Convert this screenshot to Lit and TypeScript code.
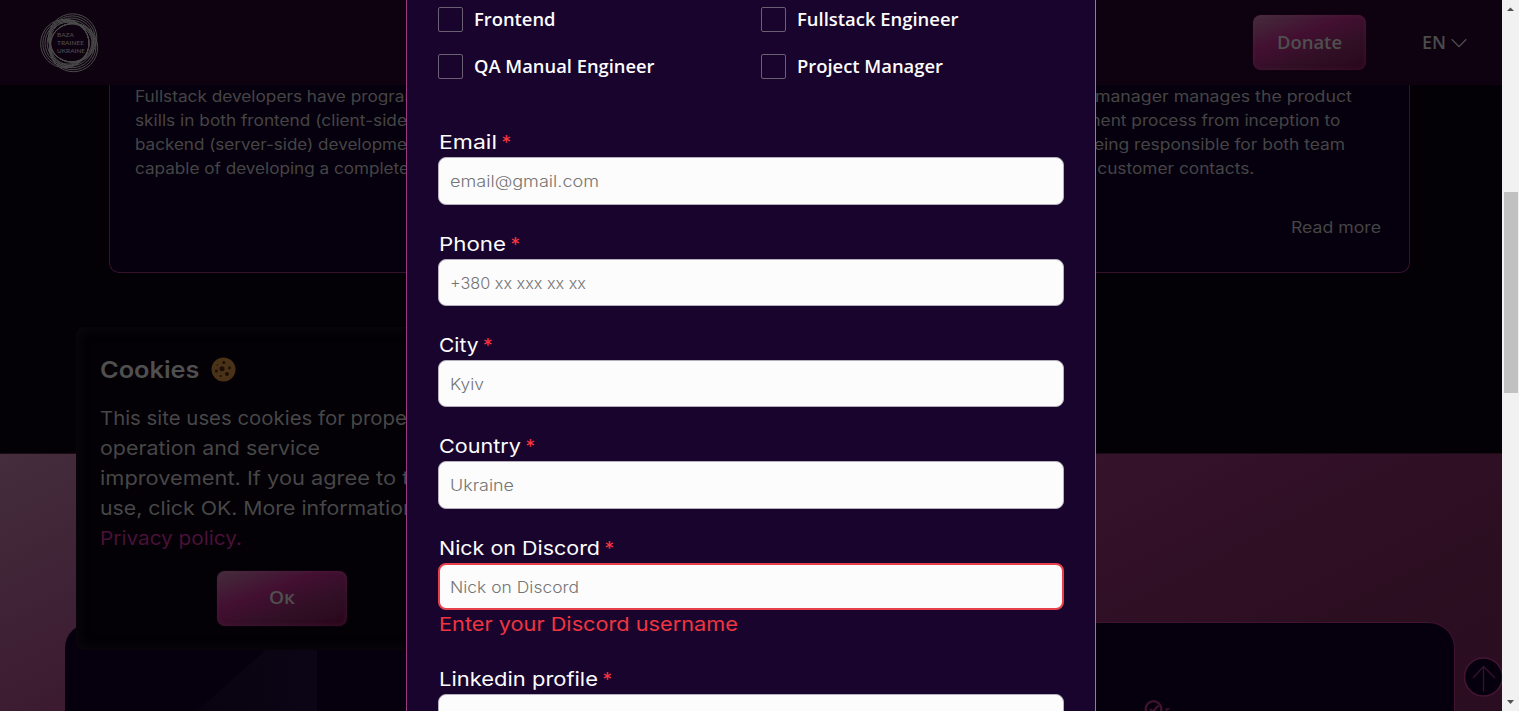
import { LitElement, html, css, svg, nothing } from "lit";
import { customElement, property, query } from "lit/decorators.js";

/** One line of text whose visible run is stretched to a given width. */
@customElement("fit-text")
class FitText extends LitElement {
  @property({ type: Number }) w = 0;
  @property() text = "";
  @property() lead = "";
  @property() tail = "";
  @query(".run") run!: HTMLElement;
  @query(".line") line!: HTMLElement;

  static styles = css`
    :host { display: inline-flex; white-space: pre; vertical-align: top; }
    .line { display: inline-flex; flex: none; transform-origin: 0 50%; }
    .line.end { transform-origin: 100% 50%; }
    :host([flip]) { justify-content: flex-end; }
  `;

  render() {
    return html`<span class="line ${this.lead ? "end" : ""}"
      ><span>${this.lead}</span><span class="run">${this.text}</span><span>${this.tail}</span></span
    >`;
  }

  updated() {
    const natural = this.run.getBoundingClientRect().width;
    if (!natural || !this.w) return;
    this.style.width = `${this.w}px`;
    this.line.style.transform = `scaleX(${this.w / natural})`;
  }
}

@customElement("form-field")
class FormField extends LitElement {
  @property() label = "";
  @property({ type: Number }) lw = 0;
  @property() hint = "";
  @property({ type: Number }) hw = 0;
  @property() error = "";

  static styles = css`
    :host { display: block; font-family: Inter, sans-serif; }
    .label { display: flex; gap: 4.5px; height: 30px; line-height: 31px; font-size: 19.2px; color: #fcfcfc; padding-left: 1px; font-weight: 400; }
    .star { color: #fc3441; }
    .input { box-sizing: border-box; height: 47.3px; border-radius: 8px; background: #fcfcfc; border: 1px solid #b5afbb;
      padding: 0 11px; font-size: 15.2px; line-height: 47px; color: #757575; font-weight: 300; }
    .input.bad { border: 2px solid #e8404b; padding: 0 10px; line-height: 45px; }
    .error { height: 30px; line-height: 29px; font-size: 19.2px; color: #f03541; padding-left: 1px; font-weight: 400; }
  `;

  render() {
    return html`
      <div class="label"><fit-text .w=${this.lw} .text=${this.label}></fit-text><span class="star">*</span></div>
      <div class="input ${this.error ? "bad" : ""}"><fit-text .w=${this.hw} .text=${this.hint}></fit-text></div>
      ${this.error ? html`<div class="error"><fit-text .w=${299} .text=${this.error}></fit-text></div>` : nothing}
    `;
  }
}

const ROLES: [string, number][] = [
  ["Frontend", 81.5],
  ["Fullstack Engineer", 161.5],
  ["QA Manual Engineer", 180.5],
  ["Project Manager", 146],
];

const FIELDS = [
  { label: "Email", lw: 58, hint: "email@gmail.com", hw: 149 },
  { label: "Phone", lw: 67, hint: "+380 xx xxx xx xx", hw: 136 },
  { label: "City", lw: 39.5, hint: "Kyiv", hw: 34 },
  { label: "Country", lw: 82, hint: "Ukraine", hw: 64 },
  { label: "Nick on Discord", lw: 161, hint: "Nick on Discord", hw: 129, error: "Enter your Discord username" },
  { label: "Linkedin profile", lw: 159, hint: "", hw: 0 },
];

const LEFT_LINES: [string, number, string][] = [
  ["Fullstack developers have progra", 269.5, "mming"],
  ["skills in both frontend (client-side", 272, ")"],
  ["backend (server-side) developme", 272, "nt"],
  ["capable of developing a complete", 274, ""],
];
const RIGHT_LINES: [string, number, number, string][] = [
  ["manager manages the product", 257, 0.5, "Project "],
  ["process from inception to", 209, 12.5, "development "],
  ["responsible for both team", 211, 7.5, "being "],
  ["customer contacts.", 157, 98.5, "and "],
];

const COOKIE_LINES: [string, number, string][] = [
  ["This site uses cookies for prop", 295, "er"],
  ["operation and service", 220, ""],
  ["improvement. If you agree to", 296, " their"],
  ["use, click OK. More informatio", 303, "n"],
];

/** Three fans of circles, each touching the hollow centre on one side. */
const rings = [-65, 55, 175].flatMap((deg) => {
  const a = (deg * Math.PI) / 180;
  return [0, 1, 2, 3].map((i) => {
    const off = 2.2 + 1.1 * i;
    return { x: 30.3 + off * Math.cos(a), y: 30 + off * Math.sin(a), r: 20.9 + 1.1 * i };
  });
});

@customElement("app-root")
class AppRoot extends LitElement {
  static styles = css`
    :host { display: block; position: relative; width: 1519px; height: 711px; overflow: hidden; background: #030006;
      font-family: Inter, sans-serif; color: #4b4b4b; }
    .shell { display: flex; height: 711px; }
    .page { width: 1502px; height: 711px; overflow: hidden; display: flex; flex-direction: column; }
    .header { box-sizing: border-box; height: 85px; flex: none; background: #0e0110; display: flex; align-items: center;
      padding: 0 35.5px 0 40px; font-family: "Open Sans", sans-serif; font-weight: 600; font-size: 18px; }
    .logo { width: 60px; height: 60px; display: block; margin-right: auto; }
    .btn { box-sizing: border-box; display: flex; align-items: center; justify-content: center; border-radius: 8px; color: #4f4f4f;
      padding-bottom: 2px;
      background: linear-gradient(160deg, #442d3c 0%, #430f31 38%, #300f25 68%, #290619 100%);
      box-shadow: inset 0 0 5px rgba(90, 35, 70, .45), 0 0 3px #1a0716; }
    .donate { width: 113px; height: 55px; margin-right: 56px; }
    .lang { display: flex; align-items: center; gap: 4.5px; }
    .lang fit-text { padding-bottom: 2px; }
    .cards { flex: none; box-sizing: border-box; height: 188.4px; margin: 0 92.5px 0 109px; border: 1px solid #38112f; border-top: 0;
      border-radius: 0 0 10px 10px; background: #06000e; display: flex; justify-content: space-between;
      padding: 0 28px 0 24.500px; font-size: 15.3px; line-height: 24px; color: #454545; }
    .col { display: flex; flex-direction: column; align-items: flex-start; }
    .col.right { align-items: flex-end; width: 330px; }
    .line { display: flex; height: 24px; }
    .more { margin-top: 35px; }
    .band { flex: 1; margin-top: 179.6px; border-top: 1px solid #1c0a16; display: flex; padding: 168px 47px 0 65px;
      background: linear-gradient(153deg, #442d3c 0%, #3c1b31 27%, #43102f 37%, #35142b 53%, #331129 62%, #2c0e21 82%, #2a0d20 100%); }
    .panel { flex: 1; height: 90px; border-radius: 26px 26px 0 0; background: #06000e; border-top: 1px solid #401331;
      border-right: 1px solid #401331; overflow: hidden; display: flex; justify-content: space-between; }
    .bar { box-sizing: border-box; width: 17px; background: #f1f1f1; display: flex; flex-direction: column; align-items: center; }
    .bar svg { display: block; flex: none; }
    .thumb { width: 14px; height: 201px; margin: 175px 0 auto 1px; background: #c1c1c1; }
    .cookie { position: absolute; left: 76px; top: 327px; box-sizing: border-box; width: 412px; height: 323px; border-radius: 8px;
      background: #030006; box-shadow: inset 0 0 14px #0d0a10; padding: 24px; color: #474747; }
    .ctitle { display: flex; align-items: center; gap: 11px; height: 37px; font-weight: 600; font-size: 23.3px; color: #4f4f4f; }
    .ctext { margin-top: 15px; font-size: 19.2px; line-height: 30px; }
    .policy { color: #4a1139; }
    .ok { width: 130px; height: 55px; margin: 17.5px auto 0; font: 600 18px "Open Sans", sans-serif; }
    .top { position: absolute; left: 1463px; top: 656px; width: 39px; height: 42px; overflow: hidden; }
    .modal { position: absolute; left: 406px; top: 0; box-sizing: border-box; width: 690px; height: 711px; overflow: hidden;
      background: #19042e; border-left: 1px solid #9c3983; border-right: 1px solid #cc5aac; padding: 7px 31px 0; }
    .roles { display: grid; grid-template-columns: 323px 1fr; row-gap: 22.5px; font: 600 18px "Open Sans", sans-serif; color: #fcfcfc; }
    .role { display: flex; align-items: center; height: 24.5px; gap: 11px; }
    .box { box-sizing: border-box; width: 25px; height: 24.5px; border: 1px solid #6a5f73; border-radius: 2px; }
    .fields { display: flex; flex-direction: column; gap: 24px; margin-top: 48.9px; }
  `;

  render() {
    return html`
      <div class="shell">
        <div class="page">
          <div class="header">
            <svg class="logo" viewBox="0 0 60 60" fill="none" stroke="#4b4b4b" stroke-width="1">
              ${rings.map((c) => svg`<circle cx=${c.x} cy=${c.y} r=${c.r}></circle>`)}
              <g fill="#4b4b4b" stroke="none" font-family="Lato, sans-serif" font-size="6.400">
                <text x="17" y="24" textLength="17" lengthAdjust="spacingAndGlyphs">BAZA</text>
                <text x="17" y="32" textLength="27" lengthAdjust="spacingAndGlyphs">TRAINEE</text>
                <text x="17" y="39.500" textLength="28" lengthAdjust="spacingAndGlyphs">UKRAINE</text>
              </g>
            </svg>
            <div class="btn donate"><fit-text .w=${65} text="Donate"></fit-text></div>
            <div class="lang">
              <fit-text .w=${24} text="EN"></fit-text>
              <svg width="16" height="10" viewBox="0 0 16 10" fill="none" stroke="#4f4f4f" stroke-width="1.300"><path d="M.7 1.200 8 8.600l7.300-7.400"></path></svg>
            </div>
          </div>
          <div class="cards">
            <div class="col">
              ${LEFT_LINES.map(([t, w, tail]) => html`<div class="line"><fit-text .w=${w} .text=${t} .tail=${tail}></fit-text></div>`)}
            </div>
            <div class="col right">
              ${RIGHT_LINES.map(
                ([t, w, pad, lead]) => html`<div class="line" style="padding-right:${pad + 28}px">
                  <fit-text flip .w=${w} .text=${t} .lead=${lead}></fit-text>
                </div>`
              )}
              <div class="line more"><fit-text .w=${90} text="Read more"></fit-text></div>
            </div>
          </div>
          <div class="band">
            <div class="panel">
              <svg width="300" height="88" viewBox="65 624 300 88">
                <defs><linearGradient id="g"><stop offset="0" stop-color="#09020f"></stop><stop offset="1" stop-color="#0c0516"></stop></linearGradient></defs>
                <path d="M317 624v88H197L296 624z" fill="url(#g)"></path>
              </svg>
              <svg width="380" height="88" viewBox="1073 624 380 88" fill="none" stroke="#401331">
                <circle cx="1152.500" cy="710" r="7.800" stroke-width="2.200"></circle>
                <path d="m1149 710 3 2.500 5.500-6" stroke-width="2.200"></path><path d="M1165.500 714v-4h3" stroke-width="1.500"></path>
              </svg>
            </div>
          </div>
        </div>
        <div class="bar">
          <svg width="17" height="17"><path d="M5 11h7l-3.500-3.500z" fill="#505050"></path></svg>
          <div class="thumb"></div>
          <svg width="17" height="17"><path d="M5 6h7l-3.500 4z" fill="#505050"></path></svg>
        </div>
      </div>

      <div class="cookie">
        <div class="ctitle">
          <fit-text .w=${99.5} text="Cookies"></fit-text>
          <svg width="25" height="25" viewBox="0 0 25 25">
            <circle cx="12.500" cy="12.500" r="12" fill="#4a3218"></circle>
            <g fill="#1c0f07">
              <circle cx="11" cy="11.800" r="2.500"></circle><circle cx="12.800" cy="5.500" r="1.500"></circle>
              <circle cx="18.500" cy="11" r="1.400"></circle><circle cx="5.400" cy="14" r="1.500"></circle>
              <circle cx="16" cy="17" r="2"></circle><circle cx="9.700" cy="19" r="1"></circle>
              <circle cx="6.200" cy="8" r=".7"></circle>
            </g>
          </svg>
        </div>
        <div class="ctext">
          ${COOKIE_LINES.map(([t, w, tail]) => html`<div><fit-text .w=${w} .text=${t} .tail=${tail}></fit-text></div>`)}
          <div class="policy"><fit-text .w=${142} text="Privacy policy."></fit-text></div>
        </div>
        <div class="btn ok"><fit-text .w=${26} text="Ок"></fit-text></div>
      </div>

      <svg class="top" viewBox="1463 656 39 42" fill="none">
        <circle cx="1483.500" cy="677" r="19" fill="#06000e" stroke="#451536" stroke-width="1.500"></circle>
        <path d="M1483.500 691.500V666.500M1473 678l10.500-11.500L1495 678" stroke="#361230" stroke-width="1.300"></path>
      </svg>

      <div class="modal">
        <div class="roles">
          ${ROLES.map(([r, w]) => html`<div class="role"><span class="box"></span><fit-text .w=${w} .text=${r}></fit-text></div>`)}
        </div>
        <div class="fields">
          ${FIELDS.map(
            (f) => html`<form-field .label=${f.label} .lw=${f.lw} .hint=${f.hint} .hw=${f.hw} .error=${f.error ?? ""}></form-field>`
          )}
        </div>
      </div>
    `;
  }
}
